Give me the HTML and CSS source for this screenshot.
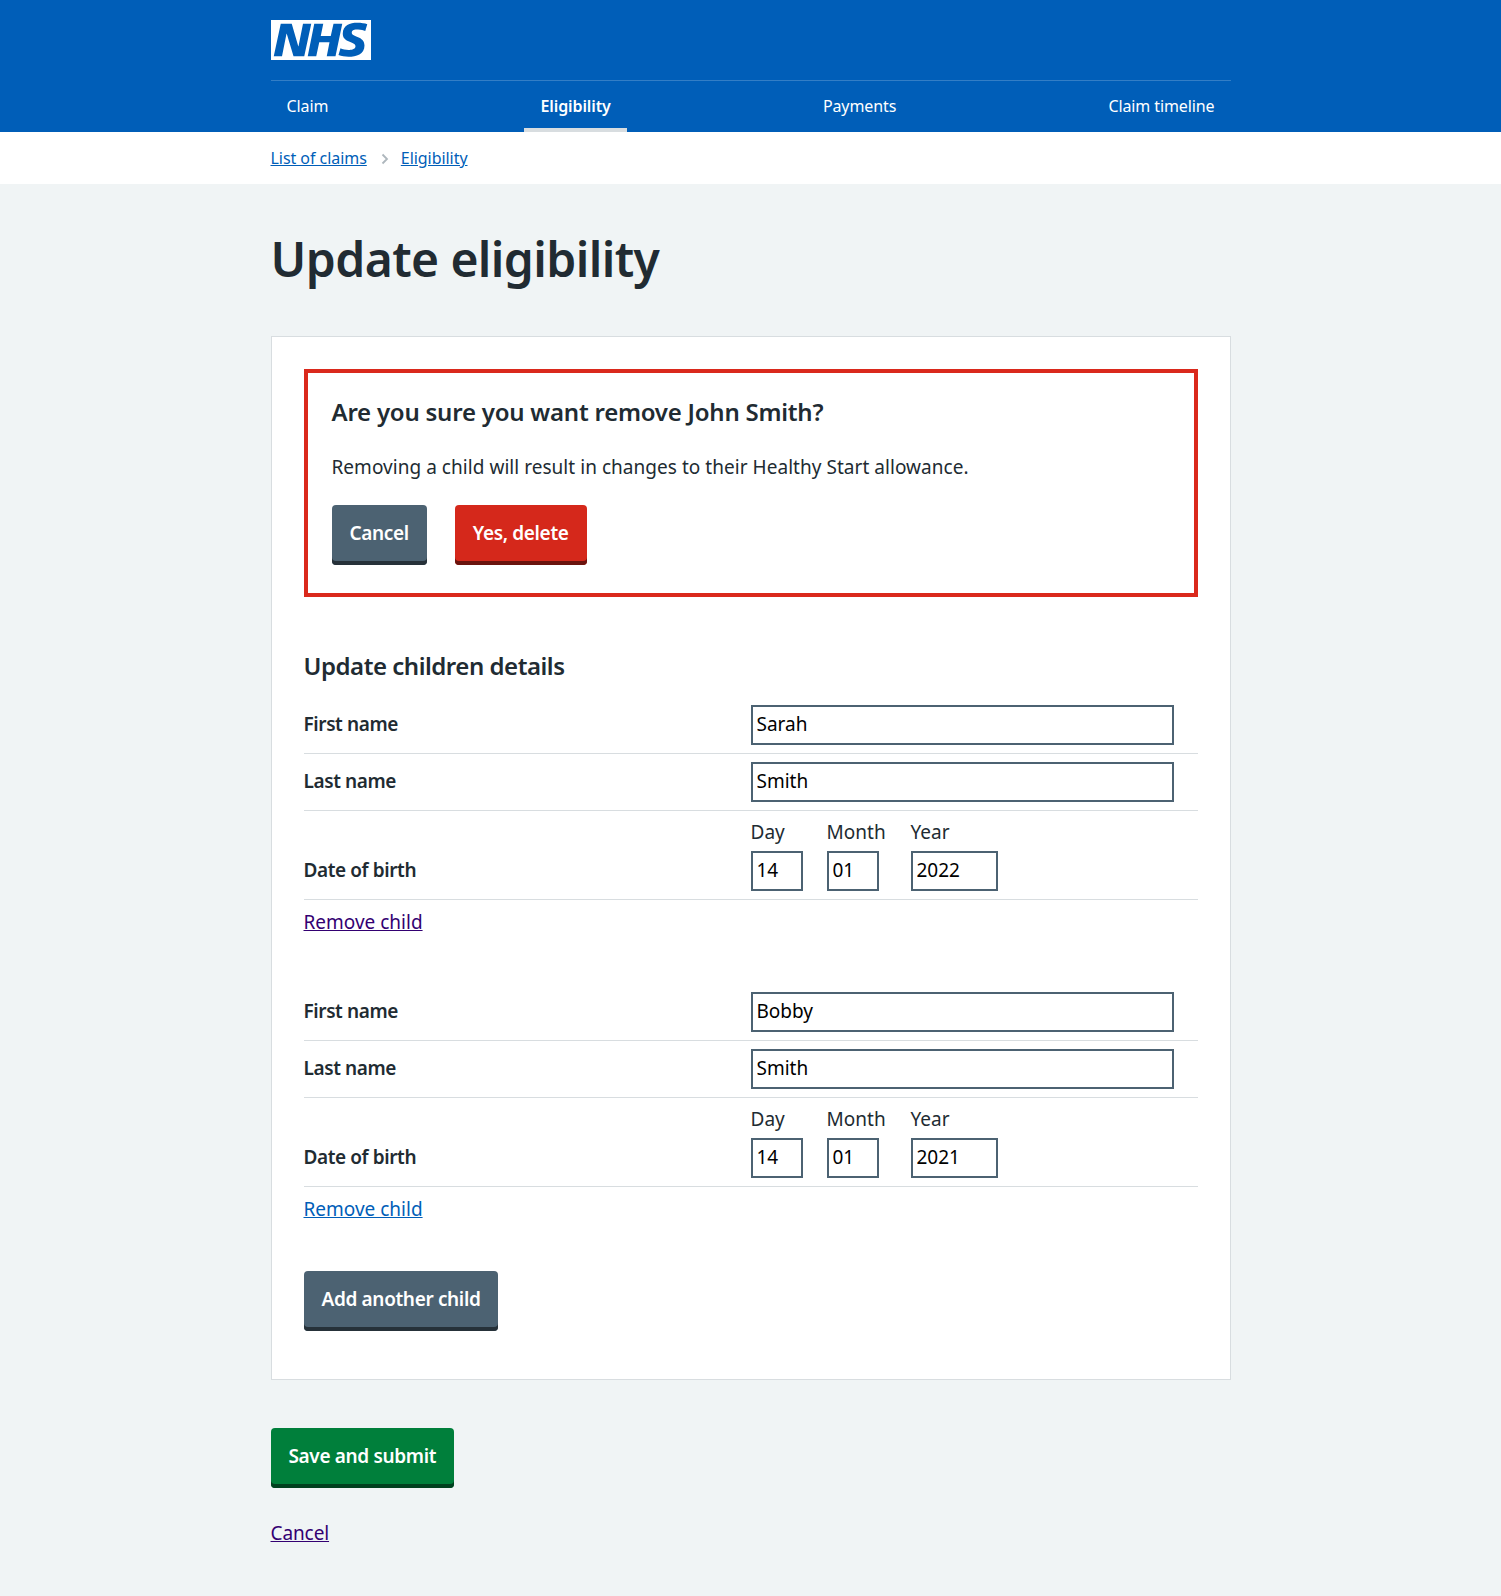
FILE: index.html
```html
<!DOCTYPE html>
<html lang="en">
<head>
    <meta charset="UTF-8">
    <meta name="viewport" content="width=device-width, initial-scale=1.0">
    <title>Update eligibility</title>
    <link rel="stylesheet" href="styles.css">
</head>
<body>

    <header class="header">
        <div class="width">
            <a class="logo" href="#" aria-label="NHS">
                <svg viewBox="0 0 40 16" xmlns="http://www.w3.org/2000/svg">
                    <path fill="#fff" d="M0 0h40v16H0z"/>
                    <path fill="#005eb8" d="M3.9 1.5h4.4l2.6 9h.1l1.8-9h3.3l-2.8 13H9l-2.7-9h-.1l-1.8 9H1.1M17.3 1.5h3.6l-1 4.9h4L25 1.5h3.5l-2.7 13h-3.5l1.1-5.6h-4.1l-1.2 5.6h-3.4M37.7 4.4c-.7-.3-1.6-.6-2.9-.6-1.4 0-2.5.2-2.5 1.3 0 1.8 5.1 1.2 5.1 5.1 0 3.6-3.3 4.5-6.4 4.5-1.3 0-2.9-.3-4-.7l.8-2.7c.7.4 2.1.7 3.2.7s2.8-.2 2.8-1.5c0-2.1-5.1-1.3-5.1-5 0-3.4 2.9-4.4 5.8-4.4 1.6 0 3.1.2 4 .6"/>
                </svg>
            </a>
            <nav class="nav">
                <a href="#">Claim</a>
                <a href="#" class="active">Eligibility</a>
                <a href="#">Payments</a>
                <a href="#">Claim timeline</a>
            </nav>
        </div>
    </header>

    <div class="breadcrumb">
        <div class="width breadcrumb-inner">
            <a href="#">List of claims</a>
            <svg class="chevron" viewBox="0 0 8 12" xmlns="http://www.w3.org/2000/svg"><path d="M1.5 1.5 6 6l-4.500 4.500" fill="none" stroke="#aeb7bd" stroke-width="1.800"/></svg>
            <a href="#">Eligibility</a>
        </div>
    </div>

    <main class="width">
        <h1>Update eligibility</h1>

        <div class="card">
            <div class="alert">
                <h2>Are you sure you want remove John Smith?</h2>
                <p>Removing a child will result in changes to their Healthy Start allowance.</p>
                <div class="alert-buttons">
                    <button class="btn btn-grey">Cancel</button>
                    <button class="btn btn-red">Yes, delete</button>
                </div>
            </div>

            <h2 class="section-title">Update children details</h2>

            <div class="child">
                <div class="row">
                    <label>First name</label>
                    <input class="text-input" type="text" value="Sarah">
                </div>
                <div class="row">
                    <label>Last name</label>
                    <input class="text-input" type="text" value="Smith">
                </div>
                <div class="row">
                    <label>Date of birth</label>
                    <div class="date">
                        <span>Day</span>
                        <span>Month</span>
                        <span>Year</span>
                        <input class="date-2" type="text" value="14">
                        <input class="date-2" type="text" value="01">
                        <input class="date-4" type="text" value="2022">
                    </div>
                </div>
                <a href="#" class="remove visited">Remove child</a>
            </div>

            <div class="child">
                <div class="row">
                    <label>First name</label>
                    <input class="text-input" type="text" value="Bobby">
                </div>
                <div class="row">
                    <label>Last name</label>
                    <input class="text-input" type="text" value="Smith">
                </div>
                <div class="row">
                    <label>Date of birth</label>
                    <div class="date">
                        <span>Day</span>
                        <span>Month</span>
                        <span>Year</span>
                        <input class="date-2" type="text" value="14">
                        <input class="date-2" type="text" value="01">
                        <input class="date-4" type="text" value="2021">
                    </div>
                </div>
                <a href="#" class="remove">Remove child</a>
            </div>

            <button class="btn btn-grey">Add another child</button>
        </div>

        <button class="btn btn-green">Save and submit</button>
        <a href="#" class="page-cancel visited">Cancel</a>
    </main>

</body>
</html>
```

FILE: styles.css
```css
* {
    box-sizing: border-box;
}
body {
    margin: 0;
    min-height: 1596px;
    font-family: "Noto Sans", Arial, sans-serif;
    font-size: 19px;
    line-height: 28px;
    letter-spacing: 0.04px;
    color: #212b32;
    background-color: #f0f4f5;
}
a {
    color: #005eb8;
}
a.visited {
    color: #330072;
}
.width {
    width: 960px;
    margin: 0 auto;
}

/* header */
.header {
    height: 132px;
    padding-top: 20px;
    background-color: #005eb8;
}
.logo {
    display: block;
    width: 100px;
    height: 40px;
}
.logo svg {
    display: block;
    width: 100px;
    height: 40px;
}
.nav {
    display: flex;
    justify-content: space-between;
    height: 52px;
    margin-top: 20px;
    border-top: 1px solid rgba(255, 255, 255, 0.2);
}
.nav a {
    height: 51px;
    padding: 12px 16px 0;
    font-size: 16px;
    line-height: 26px;
    letter-spacing: -0.1px;
    color: #fff;
    text-decoration: none;
}
.nav a.active {
    font-weight: 600;
    border-bottom: 4px solid #d8dde0;
}

/* breadcrumb */
.breadcrumb {
    height: 52px;
    background-color: #fff;
}
.breadcrumb-inner {
    display: flex;
    align-items: center;
    height: 52px;
    font-size: 16px;
    letter-spacing: -0.05px;
}
.chevron {
    width: 8px;
    height: 12px;
    margin: 1px 12px 0 14px;
}

h1 {
    margin: 47px 0 49px;
    font-size: 48px;
    line-height: 56px;
    font-weight: 600;
    letter-spacing: -0.6px;
}

/* card */
.card {
    padding: 32px 32px 48px;
    background-color: #fff;
    border: 1px solid #d8dde0;
}
.alert {
    height: 228px;
    padding: 24px;
    border: 4px solid #da291c;
}
.alert h2 {
    margin: -1px 0 0;
    font-size: 24px;
    line-height: 32px;
    font-weight: 600;
    letter-spacing: -0.23px;
}
.alert p {
    margin: 25px 0 24px;
}
.alert-buttons {
    display: flex;
    gap: 28px;
}
.section-title {
    margin: 53px 0 15px;
    font-size: 24px;
    line-height: 32px;
    font-weight: 600;
    letter-spacing: -0.47px;
}

/* buttons */
.btn {
    display: block;
    height: 60px;
    padding: 0 18px 5px;
    font-family: inherit;
    font-size: 19px;
    font-weight: 600;
    letter-spacing: -0.35px;
    color: #fff;
    border: none;
    border-radius: 4px;
    cursor: pointer;
}
.btn-grey {
    background-color: #4c6272;
    box-shadow: inset 0 -4px 0 #263139;
}
.btn-red {
    background-color: #d5281b;
    box-shadow: inset 0 -4px 0 #6a140e;
}
.btn-green {
    margin-top: 48px;
    background-color: #007f3b;
    box-shadow: inset 0 -4px 0 #00401e;
}

/* child rows */
.child {
    margin-bottom: 48px;
}
.row {
    display: flex;
    align-items: flex-end;
    padding: 8px 0;
    border-bottom: 1px solid #d8dde0;
}
.row label {
    flex: 0 0 50%;
    padding-bottom: 2px;
    font-weight: 600;
    line-height: 38px;
    letter-spacing: -0.4px;
}
input {
    height: 40px;
    padding: 0 4px 2px;
    font-family: inherit;
    font-size: 19px;
    color: #000;
    border: 2px solid #4c6272;
    border-radius: 0;
    outline: none;
}
.text-input {
    width: 423px;
}
.date {
    display: grid;
    grid-template-columns: 52px 60px 87px;
    column-gap: 24px;
    row-gap: 7px;
}
.date span {
    padding-top: 1px;
    line-height: 24px;
}
.date-2 {
    width: 52px;
}
.date-4 {
    width: 87px;
}
.remove {
    display: block;
    width: max-content;
    margin-top: 8px;
    letter-spacing: 0;
}
.page-cancel {
    display: block;
    width: max-content;
    margin-top: 31px;
    letter-spacing: -0.1px;
}
```
